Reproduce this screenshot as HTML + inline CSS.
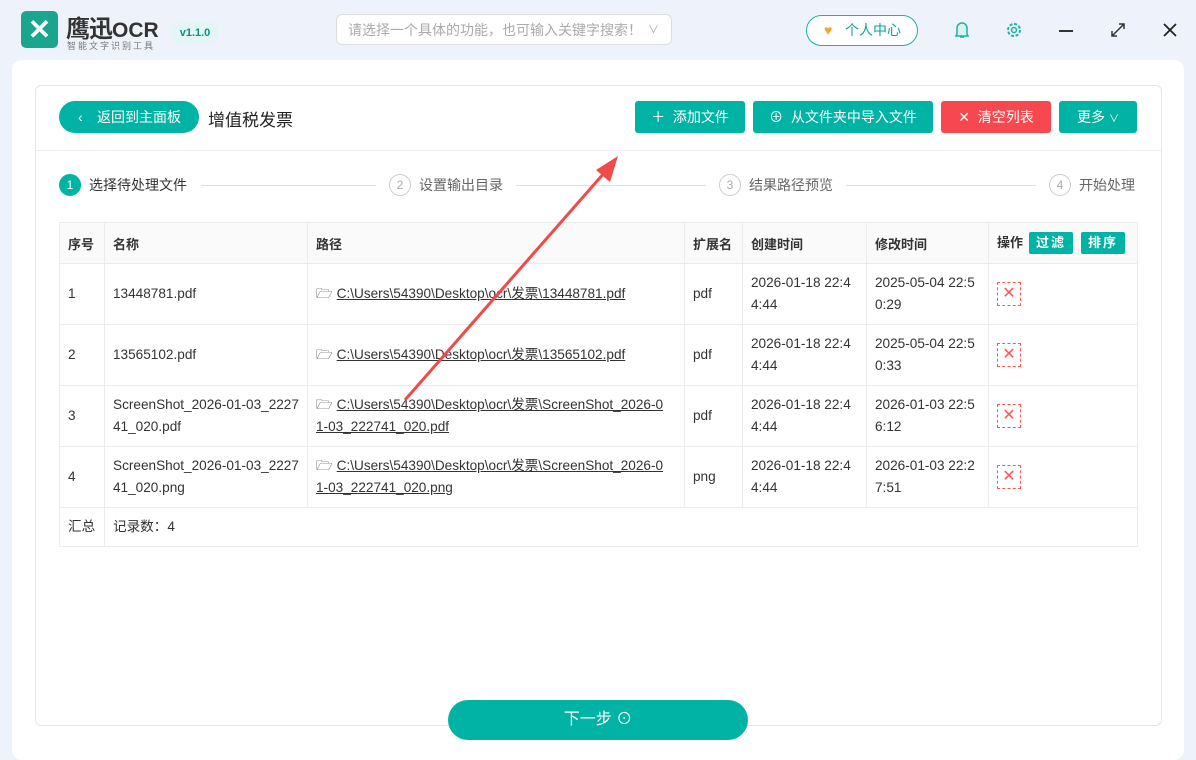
<!DOCTYPE html><html><head><meta charset="utf-8"><style>
*{margin:0;padding:0;box-sizing:border-box}
body{width:1196px;height:760px;background:#eef3fb;font-family:"Liberation Sans","Noto Sans CJK SC",sans-serif;position:relative;overflow:hidden;font-size:13px;color:#333}
.abs{position:absolute}
.card{left:12px;top:60px;width:1172px;height:700px;background:#fff;border-radius:10px}
.inner{left:35px;top:85px;width:1127px;height:641px;border:1px solid #e6e6e6;border-radius:6px;background:#fff}
.btn{position:absolute;top:101px;height:32px;background:#00b3a4;color:#fff;border-radius:3px;font-size:14px;display:flex;align-items:center;justify-content:center}
table{position:absolute;left:59px;top:222px;width:1078px;border-collapse:collapse;font-size:13.6px;table-layout:fixed}
td{border:1px solid #ebebeb;padding:0 8px;vertical-align:middle;line-height:22px;white-space:nowrap;overflow:hidden}
th{border:1px solid #ebebeb;background:#fafafa;text-align:left;padding:0 8px;height:41px;font-weight:bold;font-size:13px;color:#333;white-space:nowrap}
tr.r td{height:61px}
.u{text-decoration:underline}
.x{display:inline-block;width:24px;height:24px;border:1px dashed #f55;color:#f55;text-align:center;line-height:22px;font-size:16px}
.sb{display:inline-block;background:#00b3a4;color:#fff;font-size:13px;padding:0 7px;height:22px;line-height:22px;border-radius:2px;margin-left:6px;font-weight:bold;letter-spacing:2px}
.step{position:absolute;top:174px;font-size:14px;color:#666;display:flex;align-items:center}
.c{width:22px;height:22px;border-radius:50%;border:1px solid #ccc;color:#aaa;font-size:12px;display:flex;align-items:center;justify-content:center;margin-right:8px}
.line{position:absolute;top:185px;height:1px;background:#e0e0e0}
</style></head><body>
<div class="abs" style="left:21px;top:11px;width:37px;height:37px;background:#1aa58e;border-radius:5px;color:#fff;font-size:28px;text-align:center;line-height:37px;font-weight:bold">✕</div>
<div class="abs" style="left:66px;top:9px;font-size:24px;font-weight:bold;color:#333;letter-spacing:-1px">鹰迅<span style="font-size:21px;letter-spacing:0">OCR</span></div>
<div class="abs" style="left:67px;top:39px;font-size:9px;color:#777;letter-spacing:2px">智能文字识别工具</div>
<div class="abs" style="left:171px;top:22px;width:48px;height:22px;border-radius:11px;background:#e4f6f3;color:#0a8e7e;font-size:11px;text-align:center;line-height:22px;font-weight:bold">v1.1.0</div>
<div class="abs" style="left:336px;top:14px;width:336px;height:31px;border:1px solid #ddd;border-radius:6px;background:#fff;color:#aaa;font-size:14px;line-height:30px;padding-left:11px">请选择一个具体的功能，也可输入关键字搜索！<span style="position:absolute;right:12px;font-size:11px">∨</span></div>
<div class="abs" style="left:806px;top:15px;width:112px;height:31px;border:1px solid #1bb3a3;border-radius:16px;background:#fff;color:#0aa494;font-size:14px;line-height:29px;padding-left:38px"><span style="position:absolute;left:17px;color:#f5a623">♥</span>个人中心</div>
<svg class="abs" style="left:953px;top:20px" width="18" height="20"><path d="M4 14V8a5 5 0 0110 0v6l1 2H3z" fill="#d9f4ef" stroke="#1bb3a3" stroke-width="1.5"/><path d="M7 17h4" stroke="#1bb3a3" stroke-width="1.5"/></svg>
<svg class="abs" style="left:1005px;top:21px" width="18" height="18"><circle cx="9" cy="9" r="6" fill="none" stroke="#1bb3a3" stroke-width="2" stroke-dasharray="3 1.7"/><circle cx="9" cy="9" r="2.5" fill="none" stroke="#1bb3a3" stroke-width="1.5"/></svg>
<div class="abs" style="left:1059px;top:30px;width:14px;height:2px;background:#333"></div>
<svg class="abs" style="left:1110px;top:22px" width="16" height="16"><path d="M2 14L14 2M9 2h5v5M2 9v5h5" stroke="#333" stroke-width="1.5" fill="none"/></svg>
<svg class="abs" style="left:1162px;top:22px" width="16" height="16"><path d="M2 2L14 14M14 2L2 14" stroke="#222" stroke-width="1.8"/></svg>
<div class="abs card"></div><div class="abs inner"></div>
<div class="abs" style="left:59px;top:101px;width:140px;height:32px;background:#00b3a4;border-radius:16px;color:#fff;font-size:14px;line-height:32px;padding-left:38px"><span style="position:absolute;left:19px">‹</span>返回到主面板</div>
<div class="abs" style="left:208px;top:106px;font-size:17px;color:#222">增值税发票</div>
<div class="btn" style="left:635px;width:110px">＋&nbsp; 添加文件</div>
<div class="btn" style="left:753px;width:180px">⊕&nbsp; 从文件夹中导入文件</div>
<div class="btn" style="left:941px;width:110px;background:#f7474f">✕&nbsp; 清空列表</div>
<div class="btn" style="left:1059px;width:78px">更多&nbsp; <span style="font-size:10px">∨</span></div>
<div class="abs" style="left:36px;top:150px;width:1125px;height:1px;background:#eee"></div>
<div class="step" style="left:59px;color:#333"><div class="c" style="background:#00b3a4;border-color:#00b3a4;color:#fff">1</div>选择待处理文件</div>
<div class="line" style="left:201px;width:175px"></div>
<div class="step" style="left:389px"><div class="c">2</div>设置输出目录</div>
<div class="line" style="left:516px;width:190px"></div>
<div class="step" style="left:719px"><div class="c">3</div>结果路径预览</div>
<div class="line" style="left:846px;width:190px"></div>
<div class="step" style="left:1049px"><div class="c">4</div>开始处理</div>
<table>
<colgroup><col style="width:45px"><col style="width:203px"><col style="width:377px"><col style="width:58px"><col style="width:124px"><col style="width:122px"><col style="width:149px"></colgroup>
<tr><th>序号</th><th>名称</th><th>路径</th><th>扩展名</th><th>创建时间</th><th>修改时间</th><th>操作<span class="sb">过滤</span><span class="sb" style="margin-left:8px">排序</span></th></tr>
<tr class="r"><td>1</td><td>13448781.pdf</td><td>🗁 <span class="u">C:\Users\54390\Desktop\ocr\发票\13448781.pdf</span></td><td>pdf</td><td>2026-01-18 22:4<br>4:44</td><td>2025-05-04 22:5<br>0:29</td><td><span class="x">✕</span></td></tr>
<tr class="r"><td>2</td><td>13565102.pdf</td><td>🗁 <span class="u">C:\Users\54390\Desktop\ocr\发票\13565102.pdf</span></td><td>pdf</td><td>2026-01-18 22:4<br>4:44</td><td>2025-05-04 22:5<br>0:33</td><td><span class="x">✕</span></td></tr>
<tr class="r"><td>3</td><td>ScreenShot_2026-01-03_2227<br>41_020.pdf</td><td>🗁 <span class="u">C:\Users\54390\Desktop\ocr\发票\ScreenShot_2026-0<br>1-03_222741_020.pdf</span></td><td>pdf</td><td>2026-01-18 22:4<br>4:44</td><td>2026-01-03 22:5<br>6:12</td><td><span class="x">✕</span></td></tr>
<tr class="r"><td>4</td><td>ScreenShot_2026-01-03_2227<br>41_020.png</td><td>🗁 <span class="u">C:\Users\54390\Desktop\ocr\发票\ScreenShot_2026-0<br>1-03_222741_020.png</span></td><td>png</td><td>2026-01-18 22:4<br>4:44</td><td>2026-01-03 22:2<br>7:51</td><td><span class="x">✕</span></td></tr>
<tr><td style="height:39px">汇总</td><td colspan="6">记录数：4</td></tr>
</table>
<svg class="abs" style="left:0;top:0" width="1196" height="760"><path d="M405 400L605 172" stroke="#f04a4a" stroke-width="3"/><path d="M618 156L596 170L610 182Z" fill="#f04a4a"/></svg>
<div class="abs" style="left:448px;top:700px;width:300px;height:40px;border-radius:20px;background:#00b3a4;color:#fff;font-size:16px;text-align:center;line-height:40px">下一步 ⊙</div>
</body></html>
